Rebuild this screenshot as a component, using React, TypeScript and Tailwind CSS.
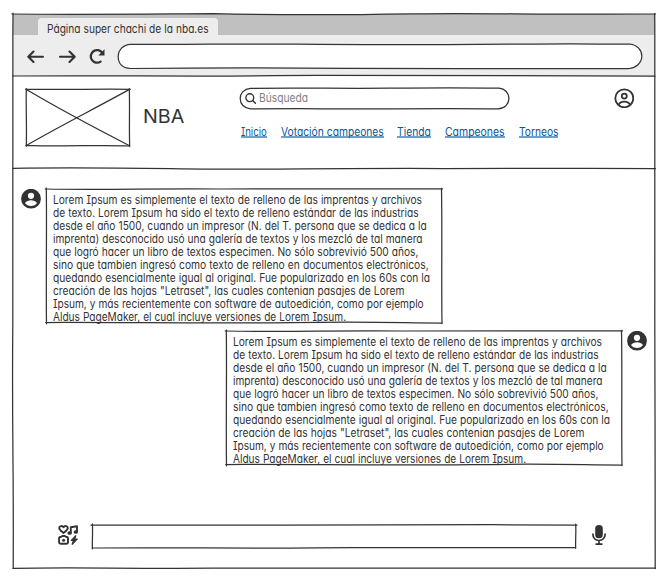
import { useLayoutEffect, useRef, useState } from "react";
import type { ReactNode } from "react";

const LOREM: [string, number][] = [
  ["Lorem Ipsum es simplemente el texto de relleno de las imprentas y archivos", 369],
  ["de texto. Lorem Ipsum ha sido el texto de relleno estándar de las industrias", 365.5],
  ["desde el año 1500, cuando un impresor (N. del T. persona que se dedica a la", 374],
  ["imprenta) desconocido usó una galería de textos y los mezcló de tal manera", 370],
  ["que logró hacer un libro de textos especimen. No sólo sobrevivió 500 años,", 365.5],
  ["sino que tambien ingresó como texto de relleno en documentos electrónicos,", 375.5],
  ["quedando esencialmente igual al original. Fue popularizado en los 60s con la", 377.5],
  ['creación de las hojas "Letraset", las cuales contenian pasajes de Lorem', 351.5],
  ["Ipsum, y más recientemente con software de autoedición, como por ejemplo", 370.5],
  ["Aldus PageMaker, el cual incluye versiones de Lorem Ipsum.", 293.5],
];

/** Condenses a line of text so that it spans the given width. */
function Fit({ text, width }: { text: string; width: number }) {
  const ref = useRef<HTMLSpanElement>(null);
  const [scale, setScale] = useState(1);
  useLayoutEffect(() => {
    if (ref.current) {
      setScale(width / ref.current.offsetWidth);
    }
  }, [text, width]);
  return (
    <span className="block" style={{ width: `${width}px` }}>
      <span
        ref={ref}
        className="inline-block origin-left align-top whitespace-pre [word-spacing:.2px]"
        style={{ transform: `scaleX(${scale})` }}
      >
        {text}
      </span>
    </span>
  );
}

/** Hand-drawn strokes laid over the box that holds them. */
function Sketch({ children }: { children: ReactNode }) {
  return (
    <svg
      className="pointer-events-none absolute inset-0 h-full w-full overflow-visible"
      fill="none"
      stroke="#333333"
      strokeWidth="1.25"
      strokeLinecap="round"
      strokeLinejoin="round"
    >
      {children}
    </svg>
  );
}

function Avatar() {
  return (
    <svg className="h-5 w-5 shrink-0" viewBox="0 0 20 20">
      <circle cx="10" cy="9.700" r="9.900" fill="#333333" />
      <circle cx="10" cy="6.800" r="3.100" fill="#fff" />
      <path d="M4 14c1.300-1.900 3.800-2.700 6-2.700s4.700.8 6 2.700c-1.300 1.900-3.500 3-6 3s-4.700-1.100-6-3z" fill="#fff" />
    </svg>
  );
}

function Message() {
  return (
    <div className="relative h-[134px] w-[396px] shrink-0 bg-white pt-[5px] pl-[7px] text-[11.400px] leading-[13px]">
      {LOREM.map(([text, width]) => (
        <div key={text} className="h-[13px]">
          <Fit text={text} width={width} />
        </div>
      ))}
      <Sketch>
        <path d="M-.7 0C60 1 110-.6 175 0S320-.3 396.500-.1" />
        <path d="M395.500-.7C396.300 45 395.300 90 396 134.500" />
        <path d="M-.2 133.500C80 133.200 160 134.700 245 133.600S350 133.800 396 134" />
        <path d="M.3-1C.9 40-.1 90 .5 134.800" />
      </Sketch>
    </div>
  );
}

const LINKS: [string, number, string][] = [
  ["Inicio", 26, "w-[40px]"],
  ["Votación campeones", 102.5, "w-[116px]"],
  ["Tienda", 33.5, "w-[48px]"],
  ["Campeones", 59.5, "w-[73.500px]"],
  ["Torneos", 39.5, "w-[40px]"],
];

export default function App() {
  return (
    <div className="h-[577px] w-[667px] overflow-hidden bg-white pt-[14px] pl-[13px] font-['Inter','Liberation_Sans',sans-serif] text-[#333] [font-feature-settings:'cv11','cv08']">
      <div className="relative flex h-[554px] w-[642px] flex-col">
        <div className="flex h-[21px] bg-[#c0c0c0] pt-1 pl-[25px]">
          <div className="relative z-10 h-[19px] w-[180px] rounded-t-[4px] bg-[#ededed] pt-[3px] pl-[9px] text-[11.400px] leading-[16px]">
            <Fit text="Página super chachi de la nba.es" width={162} />
          </div>
        </div>
        <div className="flex h-[41px] bg-[#ededed] pt-[8.500px] pl-[14px]">
          <svg className="h-6 w-[91px] shrink-0" viewBox="0 0 91 24" fill="none" stroke="#333" strokeWidth="2.100" strokeLinecap="round" strokeLinejoin="round">
            <path d="M16 12.800H1.500M6.500 7.500L1.300 12.800l5.200 5.200M33 12.800h14.500M42.500 7.500l5.200 5.300-5.200 5.200" />
            <path d="M75.200 8.700A6.300 6.300 0 1 0 73.600 17.600" strokeWidth="2.300" />
            <path d="M71.300 11.500h6.200V5.300z" fill="#333" stroke="none" />
          </svg>
          <div className="relative h-[24.500px] w-[524px] shrink-0 rounded-full bg-white">
            <Sketch>
              <path d="M12.500.3C80 .7 120-.5 180 .2S300 .9 400 .1 470 .6 512 0C519 1 524 6 523.800 12.500S518 23.800 511 24.500C400 23.700 330 25.200 230 24.400S90 23.800 12.500 24.500C4 24 .1 19 .2 12.500S5 .7 12.500.3" />
            </Sketch>
          </div>
        </div>

        <header className="flex h-[92.500px] pt-[13px] pl-[13px]">
          <div className="relative h-[57px] w-[104px]">
            <Sketch>
              <path d="M-.3.1C35 1.200 70-.4 104.300.3M103.300-.5C103.900 20 103 40 103.700 57.500M-.2 56.300C35 57.700 75 55.900 103.700 57M.3-.4C-.1 20 .9 40 .3 57.300" />
              <path d="M0 .3C35 21 69 39 103.500 56.700M.3 56.500C34 37 68 20 103.500.4" />
            </Sketch>
          </div>
          <div className="w-[110px] pt-[14.500px] pl-[13px] text-[18.500px] leading-6">
            <Fit text="NBA" width={41.5} />
          </div>
          <div className="w-[374px]">
            <div className="relative -mt-[1.500px] flex h-[21px] w-[269px] items-center pl-[5px] text-[11.400px] text-[#808080]">
              <svg className="mr-[3px] h-[11px] w-[11px]" viewBox="0 0 11 11" fill="none" stroke="#333" strokeWidth="1.400" strokeLinecap="round">
                <circle cx="4.800" cy="4.700" r="3.900" />
                <path d="M7.700 7.600l2.700 2.700" />
              </svg>
              <div className="pt-[1.500px]">
                <Fit text="Búsqueda" width={49.5} />
              </div>
              <Sketch>
                <path d="M10.500.4C60-.3 100 .7 150 .2S215.300-.4 259 .2C265 .7 269 5 268.900 10.500S265 20.400 258 20.900C190 20.100 120 21.500 60 20.700L10.500 20.900C4 20.300.2 16 .2 10.500S4 .9 10.500.4" />
              </Sketch>
            </div>
            <nav className="mt-[15.500px] flex pl-[1px] text-[11.400px] leading-4 text-[#0b5791]">
              {LINKS.map(([label, width, column]) => (
                <a key={label} className={`${column} shrink-0`}>
                  <span className="inline-block h-[14px] border-b-2 border-[#6f9fca]">
                    <Fit text={label} width={width} />
                  </span>
                </a>
              ))}
            </nav>
          </div>
          <svg className="mt-[-1px] h-5 w-5" viewBox="0 0 20 20" fill="none" stroke="#333" strokeWidth="1.800">
            <circle cx="10.300" cy="10.300" r="9" />
            <circle cx="10.300" cy="8.100" r="2.500" />
            <path d="M4.700 16.700c1.500-4.200 9.700-4.200 11.200 0" />
          </svg>
        </header>

        <main className="flex flex-col">
          <div className="flex pt-5 pl-2">
            <Avatar />
            <div className="pl-[5px]"><Message /></div>
          </div>
          <div className="flex pt-2 pl-[213px]">
            <Message />
            <div className="pl-[5px]"><Avatar /></div>
          </div>
        </main>

        <footer className="mt-[60px] flex items-start pl-[45px]">
          <svg className="h-5 w-5 overflow-visible" viewBox="0 0 20 20" fill="none" stroke="#333" strokeWidth="1.900" strokeLinejoin="round" strokeLinecap="round">
            <path d="M5.500 8C3.900 6.700 1.200 5 1.200 3c0-2.100 3-2.800 4.300-.8C6.800.2 9.800.9 9.800 3c0 2-2.700 3.700-4.300 5z" />
            <path d="M12.800 7.700V2.200l6.200-1v5.600" />
            <ellipse cx="11.600" cy="8" rx="1.300" ry=".9" fill="#333" />
            <ellipse cx="17.800" cy="7" rx="1.200" ry=".9" fill="#333" />
            <path d="M3.200 11.800l1.200-.8h2.400l1.200.8c1.300 0 2 .6 2 1.700v3.500c0 1.200-.7 1.800-1.900 1.800H3c-1.200 0-1.900-.6-1.900-1.800v-3.500c0-1.100.8-1.700 2.100-1.700z" />
            <circle cx="5.600" cy="15.200" r="1.500" fill="#333" stroke="none" />
            <path d="M17.800 10.700l-4.500 4.800h2.200L14.200 19.300l5-5.300h-2.600z" fill="#333" strokeWidth="1.200" />
          </svg>
          <div className="relative ml-[14px] h-[23px] w-[484px]">
            <Sketch>
              <path d="M-1 .2C60-.2 110 .8 190 .2S340 .5 400-.3L485 .2M483.700-.8C484.200 8 483.300 16 483.700 23.300M0 23C80 22.300 145 23.600 225 22.800S380 23.500 483.700 22.700M.4-1C.9 8 .1 16 .4 23.800" />
            </Sketch>
          </div>
          <svg className="ml-[14.500px] h-5 w-4" viewBox="0 0 16 20" fill="none" stroke="#333" strokeWidth="1.700">
            <rect x="4.200" y="0" width="7.600" height="13.300" rx="3.600" fill="#333" stroke="none" />
            <path d="M1.800 8.500c0 4.100 2.400 7 6.200 7s6.200-2.900 6.200-7M8 15.500v3.700M4.500 19.200h7" />
          </svg>
        </footer>

        <Sketch>
          <path d="M-1 0C70 .7 120 .1 200-.4 280 1.400 330 .9 400-.2S520 .8 642.500 0" />
          <path d="M-.5 62C90 61.200 170 62.700 260 61.700S400 62.500 642 62" />
          <path d="M0 154.400C60 153.200 100 153.900 170 154.900S320 154 430 154.500 570 154 642.500 154.500" />
          <path d="M641.700-.4C642.700 100 640.900 200 641.800 310S641.500 440 642.200 554.500" />
          <path d="M0-.8C-.8 100 .8 200-.2 310S.8 440 .2 554.300" />
          <path d="M0 554.400C60 552.900 110 554.900 200 554.200S420 553.600 642.500 554.200" />
        </Sketch>
      </div>
    </div>
  );
}
